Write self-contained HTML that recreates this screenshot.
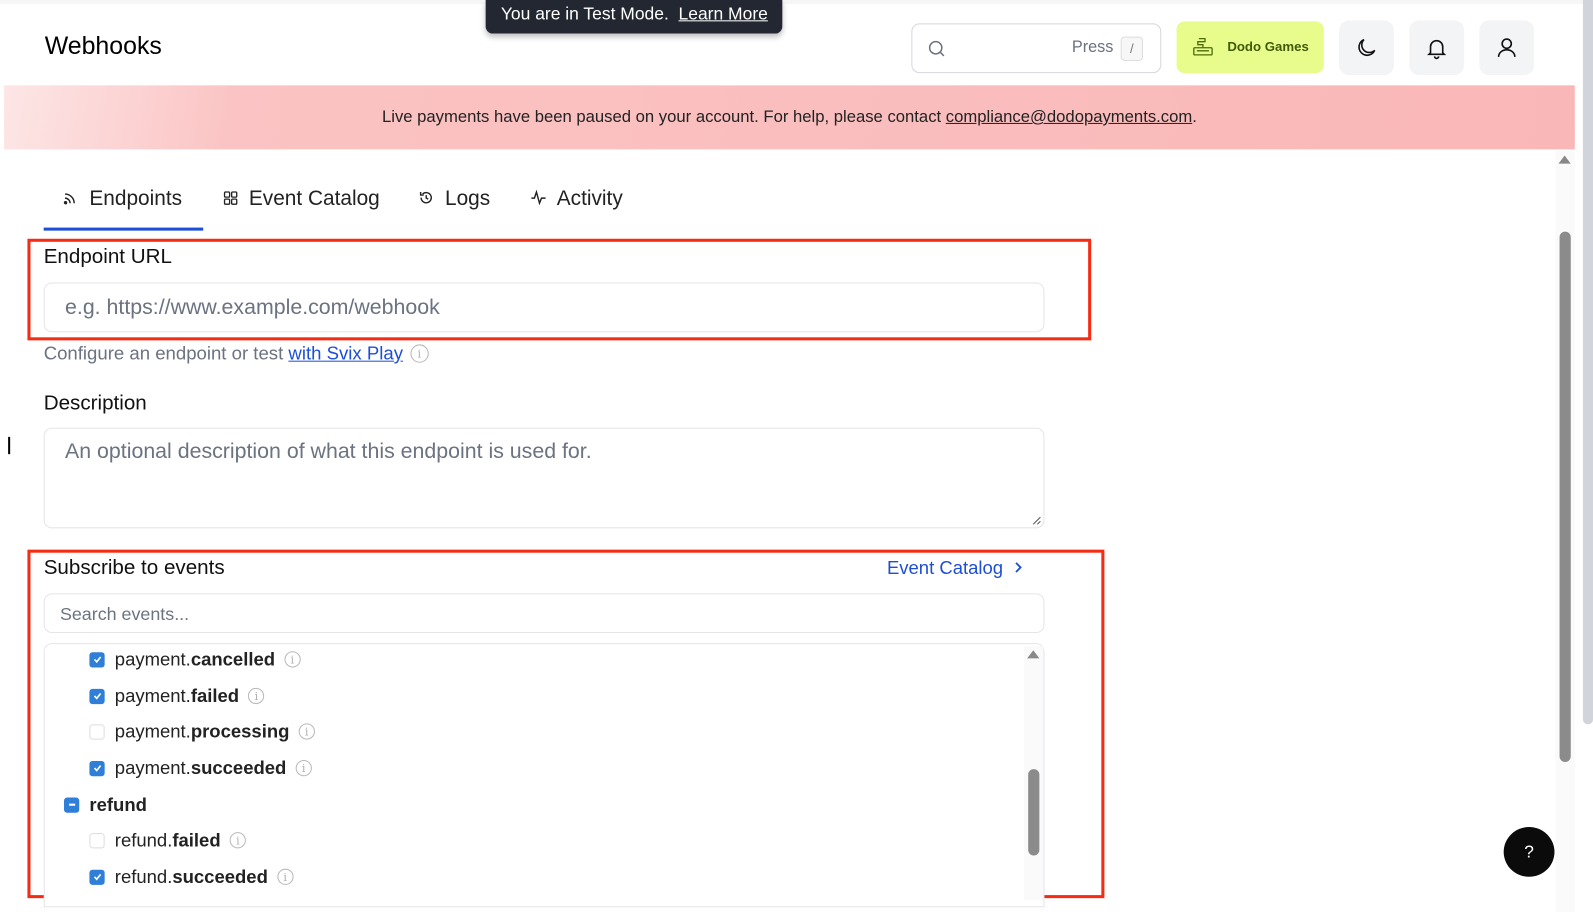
<!DOCTYPE html>
<html><head><meta charset="utf-8"><style>
*{box-sizing:border-box;margin:0;padding:0}
body{width:1593px;height:898px;overflow:hidden;background:#fff;font-family:"Liberation Sans",sans-serif;color:#111827;position:relative}
#w{position:absolute;left:0;top:0;width:1568px;height:884px;transform:scale(1.016);transform-origin:0 0}
.a{position:absolute}
.ib{background:#f3f4f6;border-radius:10px;width:54px;height:54px;top:20px;display:flex;align-items:center;justify-content:center}
.lbl{font-size:20.3px;color:#111;}
.box{border:1px solid #e3e5ea;border-radius:8px;background:#fff}
.ph{color:#6b7280}
.row{position:absolute;left:88px;font-size:18.2px;color:#222;display:flex;align-items:center;height:20px}
.cb{width:15px;height:15px;border-radius:3px;background:#2f7fd8;margin-right:10px;display:inline-flex;align-items:center;justify-content:center}
.cb.e{background:#fff;border:1.5px solid #dcdde3}
.row b{font-weight:bold}
.inf{width:16px;height:16px;border:1.3px solid #b8b8b8;border-radius:50%;margin-left:9px;font-size:11px;color:#b0b0b0;display:inline-flex;align-items:center;justify-content:center;font-family:"DejaVu Serif",serif}
.red{border:3px solid #f52c13}
</style></head><body><div id="w">
<div class="a" style="left:0;top:0;width:1568px;height:4px;background:#f6f6f6"></div>
<div class="a" style="left:44px;top:32px;font-size:24.5px;color:#000">Webhooks</div>
<div class="a" style="left:478px;top:0;width:292px;height:33px;background:#222732;border-radius:0 0 7px 7px;color:#fff;font-size:17.2px;line-height:26px;padding-left:15px;box-shadow:0 3px 6px rgba(0,0,0,.25)">You are in Test Mode.&nbsp; <u>Learn More</u></div>
<div class="a box" style="left:897px;top:23px;width:246px;height:49px;border-radius:8px;border-color:#d5d7de">
<svg class="a" style="left:15px;top:15px" width="18" height="18" viewBox="0 0 18 18" fill="none" stroke="#6b7280" stroke-width="1.5"><circle cx="8" cy="8" r="6"/><path d="M12.5 12.5L16 16"/></svg>
<span class="a" style="left:157px;top:14px;font-size:16px;color:#6b7280">Press</span>
<span class="a" style="left:205px;top:12px;width:22px;height:24px;border:1px solid #ddd;border-radius:4px;background:#f7f7f8;font-size:13px;color:#777;text-align:center;line-height:22px">/</span></div>
<div class="a" style="left:1158px;top:21px;width:145px;height:51px;background:#e8fc8c;border-radius:8px">
<svg class="a" style="left:15px;top:14px" width="22" height="22" viewBox="0 0 22 22" fill="none" stroke="#4d6b0a" stroke-width="1.3"><rect x="2" y="12" width="18" height="7" rx="1"/><path d="M5 15h12M11 12V9H6V6h7V3H7"/></svg>
<span class="a" style="left:50px;top:17px;font-size:13px;font-weight:bold;color:#3f5a0a">Dodo Games</span></div>
<div class="a ib" style="left:1318px"><svg width="24" height="24" viewBox="0 0 24 24" fill="none" stroke="#111" stroke-width="1.6"><path d="M20 14.5A8 8 0 1 1 9.5 4a6.5 6.5 0 0 0 10.5 10.5z"/></svg></div>
<div class="a ib" style="left:1387px"><svg width="24" height="24" viewBox="0 0 24 24" fill="none" stroke="#111" stroke-width="1.6"><path d="M6 17V11a6 6 0 0 1 12 0v6l1.5 1.5h-15z M10 20.5a2 2 0 0 0 4 0"/></svg></div>
<div class="a ib" style="left:1456px"><svg width="24" height="24" viewBox="0 0 24 24" fill="none" stroke="#111" stroke-width="1.6"><circle cx="12" cy="8" r="4.5"/><path d="M4 21c0-4 3.5-7 8-7s8 3 8 7"/></svg></div>
<div class="a" style="left:4px;top:84px;width:1546px;height:63px;background:linear-gradient(100deg,#fde6e6 0%,#fbc3c3 15%,#fab7b7 100%);font-size:16.4px;color:#222;text-align:center;line-height:62px">Live payments have been paused on your account. For help, please contact <u>compliance@dodopayments.com</u>.</div>
<!-- tabs -->
<div class="a" style="left:62px;top:184px;font-size:20.5px;color:#222"><svg width="14" height="14" viewBox="0 0 14 14" fill="none" stroke="#222" stroke-width="1.4" style="margin-right:12px"><path d="M2 3a9 9 0 0 1 9 9M2 7a5 5 0 0 1 5 5"/><circle cx="2.5" cy="11.5" r="1" fill="#222"/></svg>Endpoints</div>
<div class="a" style="left:43px;top:224px;width:157px;height:3px;background:#1d4ed8"></div>
<div class="a" style="left:220px;top:184px;font-size:20.5px;color:#222"><svg width="14" height="14" viewBox="0 0 14 14" fill="none" stroke="#222" stroke-width="1.3" style="margin-right:11px"><rect x="1" y="1" width="5" height="5" rx="1"/><rect x="8" y="1" width="5" height="5" rx="1"/><rect x="1" y="8" width="5" height="5" rx="1"/><rect x="8" y="8" width="5" height="5" rx="1"/></svg>Event Catalog</div>
<div class="a" style="left:412px;top:184px;font-size:20.5px;color:#222"><svg width="15" height="15" viewBox="0 0 15 15" fill="none" stroke="#222" stroke-width="1.4" style="margin-right:11px"><path d="M2.5 7.5a5 5 0 1 0 1.5-3.5M2 2v3h3M7.5 5v3l2 1"/></svg>Logs</div>
<div class="a" style="left:522px;top:184px;font-size:20.5px;color:#222"><svg width="16" height="15" viewBox="0 0 16 15" fill="none" stroke="#222" stroke-width="1.4" style="margin-right:10px"><path d="M1 8h3l2-6 3 11 2-5h4"/></svg>Activity</div>
<!-- endpoint -->
<div class="a red" style="left:27px;top:235px;width:1047px;height:100px"></div>
<div class="a lbl" style="left:43px;top:242px">Endpoint URL</div>
<div class="a box" style="left:43px;top:278px;width:985px;height:49px"><span class="a ph" style="left:20px;top:12px;font-size:21px">e.g. https://www.example.com/webhook</span></div>
<div class="a" style="left:43px;top:337px;font-size:18.3px;color:#6b7280;display:flex;align-items:center">Configure an endpoint or test&nbsp;<u style="color:#1d4ed8">with Svix Play</u><span class="inf" style="width:18px;height:18px;margin-left:7px">i</span></div>
<div class="a lbl" style="left:43px;top:386px">Description</div>
<div class="a" style="left:8px;top:430px;width:1.5px;height:17px;background:#000"></div>
<div class="a box" style="left:43px;top:421px;width:985px;height:99px"><span class="a ph" style="left:20px;top:11px;font-size:21px">An optional description of what this endpoint is used for.</span>
<svg class="a" style="right:2px;bottom:2px" width="10" height="10"><path d="M9 2L2 9M9 6L6 9" stroke="#555"/></svg></div>
<!-- subscribe -->
<div class="a red" style="left:27px;top:541px;width:1060px;height:343px"></div>
<div class="a lbl" style="left:43px;top:548px">Subscribe to events</div>
<div class="a" style="left:873px;top:549px;font-size:18.2px;color:#1d4ed8">Event Catalog&nbsp;&nbsp;<svg width="10" height="13" viewBox="0 0 10 13" fill="none" stroke="#1d4ed8" stroke-width="1.8"><path d="M3 2l4.5 4.5L3 11"/></svg></div>
<div class="a box" style="left:43px;top:584px;width:985px;height:39px"><span class="a ph" style="left:15px;top:9px;font-size:17.6px">Search events...</span></div>
<div class="a box" style="left:43px;top:633px;width:985px;height:260px;border-radius:8px 8px 0 0"></div>
<div class="a" style="left:1008px;top:636px;width:19px;height:250px;background:#fafafa"></div>
<div class="a" style="left:1011px;top:640px;width:0;height:0;border-left:6px solid transparent;border-right:6px solid transparent;border-bottom:8px solid #888"></div>
<div class="a" style="left:1012px;top:757px;width:11px;height:85px;background:#8b8b8b;border-radius:6px"></div>
<div class="row" style="left:88px;top:639px"><span class="cb"><svg width="10" height="10"><path d="M2 5l2.2 2.4L8 2.6" stroke="#fff" stroke-width="1.6" fill="none"/></svg></span>payment.<b>cancelled</b><span class="inf">i</span></div>
<div class="row" style="left:88px;top:675px"><span class="cb"><svg width="10" height="10"><path d="M2 5l2.2 2.4L8 2.6" stroke="#fff" stroke-width="1.6" fill="none"/></svg></span>payment.<b>failed</b><span class="inf">i</span></div>
<div class="row" style="left:88px;top:710px"><span class="cb e"></span>payment.<b>processing</b><span class="inf">i</span></div>
<div class="row" style="left:88px;top:746px"><span class="cb"><svg width="10" height="10"><path d="M2 5l2.2 2.4L8 2.6" stroke="#fff" stroke-width="1.6" fill="none"/></svg></span>payment.<b>succeeded</b><span class="inf">i</span></div>
<div class="row" style="left:63px;top:782px"><span class="cb"><svg width="10" height="10"><path d="M2 5h6" stroke="#fff" stroke-width="2"/></svg></span><b>refund</b></div>
<div class="row" style="left:88px;top:817px"><span class="cb e"></span>refund.<b>failed</b><span class="inf">i</span></div>
<div class="row" style="left:88px;top:853px"><span class="cb"><svg width="10" height="10"><path d="M2 5l2.2 2.4L8 2.6" stroke="#fff" stroke-width="1.6" fill="none"/></svg></span>refund.<b>succeeded</b><span class="inf">i</span></div>
<!-- scrollbars -->
<div class="a" style="left:1531px;top:148px;width:19px;height:750px;background:#fafafa"></div>
<div class="a" style="left:1534px;top:153px;width:0;height:0;border-left:6px solid transparent;border-right:6px solid transparent;border-bottom:8px solid #888"></div>
<div class="a" style="left:1535px;top:228px;width:11px;height:522px;background:#8b8b8b;border-radius:6px"></div>
<div class="a" style="left:1558px;top:0;width:10px;height:713px;background:#d1d5db;border-radius:0 0 5px 5px"></div>
<div class="a" style="left:1480px;top:814px;width:50px;height:49px;background:#0b0b0b;border-radius:50%;color:#fff;text-align:center;line-height:49px;font-size:17px">?</div>
</div></body></html>
